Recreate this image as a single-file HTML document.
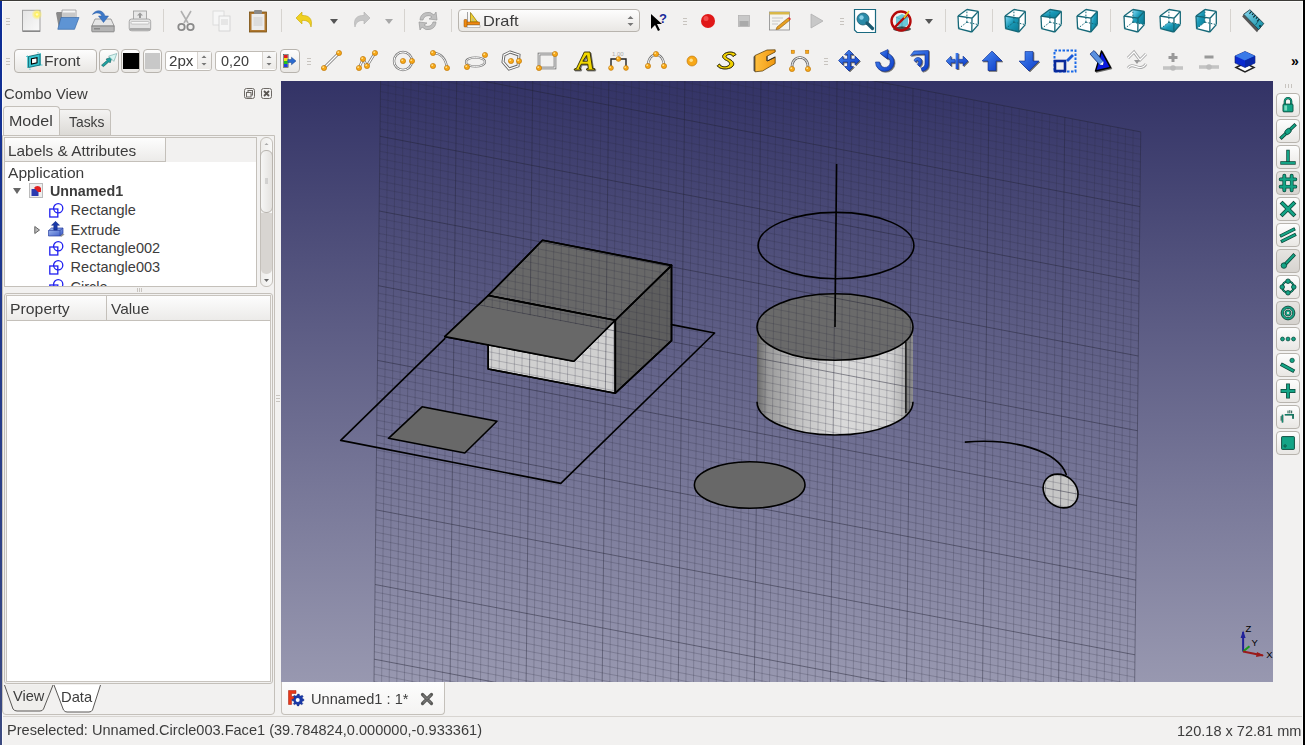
<!DOCTYPE html><html><head><meta charset="utf-8"><style>
html,body{margin:0;padding:0}
body{width:1305px;height:745px;overflow:hidden;position:relative;background:#f2f1f0;font-family:"Liberation Sans",sans-serif}
.abs{position:absolute}
.ic{position:absolute;overflow:visible}
.t{position:absolute;white-space:pre}
.btn{position:absolute;box-sizing:border-box;border:1px solid #b8b4ae;border-radius:4px;background:linear-gradient(#fdfdfd,#e9e7e4)}
</style></head><body>

<div class="abs" style="left:0;top:0;width:1305px;height:1px;background:#3c3b37"></div>
<div class="abs" style="left:0;top:1px;width:2px;height:744px;background:linear-gradient(#0c2c96,#3c4a80)"></div>
<div class="abs" style="left:2px;top:1px;width:1px;height:744px;background:#fbfbfa"></div>
<div class="abs" style="left:2px;top:1px;width:1300px;height:1px;background:#fbfbfa"></div>
<div class="abs" style="left:1302px;top:1px;width:1px;height:744px;background:#fbfbfa"></div>
<div class="abs" style="left:1303px;top:0;width:2px;height:745px;background:#000"></div>
<div class="abs" style="left:6px;top:18px;width:4px;height:1px;background:#c8c4bf;box-shadow:0 3px 0 #c8c4bf,0 6px 0 #c8c4bf"></div>
<svg class="ic" style="left:19.5px;top:9px" width="24" height="24" viewBox="0 0 24 24"><defs><linearGradient id="ng" x1="0" y1="0" x2="1" y2="1"><stop offset="0" stop-color="#e4e4e4"/><stop offset="1" stop-color="#fafafa"/></linearGradient><radialGradient id="sun"><stop offset="0" stop-color="#ffffe0"/><stop offset="0.35" stop-color="#fff060"/><stop offset="1" stop-color="#fff060" stop-opacity="0"/></radialGradient></defs><rect x="2.5" y="1.3" width="17.5" height="21" fill="url(#ng)" stroke="#a0a0a0" stroke-width="1"/><rect x="3" y="21.5" width="17" height="1.2" fill="#777"/><circle cx="17" cy="5.4" r="5.5" fill="url(#sun)"/></svg>
<svg class="ic" style="left:55px;top:8px" width="24" height="24" viewBox="0 0 24 24"><path d="M1,5 L2,4 L8,4 L8,21 L4,21 Z" fill="#8a8a8a"/><path d="M7,2 L21,2 L21,10 L7,10 Z" fill="#f6f6f6" stroke="#9a9a9a" stroke-width="0.8"/><path d="M7.5,4.5 L20.5,4.5 L20.5,9 L7.5,9 Z" fill="#c8c8c8"/><path d="M6,9.5 L24,9.5 L19.5,21.3 L2.8,21.3 Z" fill="#5e94d4" stroke="#3a6aa8" stroke-width="0.7"/></svg>
<svg class="ic" style="left:91px;top:9px" width="24" height="24" viewBox="0 0 24 24"><path d="M4,10 L20,10 L23.2,17 L0.8,17 Z" fill="#e6e6e6" stroke="#8a8a8a" stroke-width="0.8"/><path d="M0.8,17 L23.2,17 L23.2,22.2 Q23.2,22.8 22.5,22.8 L1.5,22.8 Q0.8,22.8 0.8,22.2 Z" fill="#b4b4b4" stroke="#7a7a7a" stroke-width="0.8"/><rect x="3" y="19" width="6" height="1.5" fill="#888"/><path d="M1.5,5.5 C4,0.5 12,0 14,7 L17.5,7 L12.5,13.5 L7.5,7 L10.8,7 C10,3.5 5,3 1.5,5.5 Z" fill="#3c78c8" stroke="#2a5aa0" stroke-width="0.5"/></svg>
<svg class="ic" style="left:127.5px;top:9px" width="24" height="24" viewBox="0 0 24 24"><rect x="5.5" y="2" width="13" height="9" fill="#e8e8e8" stroke="#9a9a9a" stroke-width="0.8"/><path d="M12,3.5 L15,6.5 L13,6.5 L13,9 L11,9 L11,6.5 L9,6.5 Z" fill="#9a9a9a"/><rect x="1.2" y="10" width="21.5" height="11.8" rx="2.5" fill="#e2e2e2" stroke="#9a9a9a" stroke-width="0.8"/><rect x="3" y="12.5" width="18" height="2.5" rx="1" fill="#f8f8f8" stroke="#aaa" stroke-width="0.6"/><rect x="1.5" y="19" width="21" height="2.6" rx="1.2" fill="#aaa"/></svg>
<div class="abs" style="left:163px;top:9px;width:1px;height:23px;background:#d6d3cf"></div>
<svg class="ic" style="left:174px;top:9px" width="24" height="24" viewBox="0 0 24 24"><path d="M7,2 L14,14 M17,2 L10,14" stroke="#b0b0b0" stroke-width="1.6" fill="none"/><circle cx="7.5" cy="18" r="3.2" fill="none" stroke="#8a8a8a" stroke-width="1.8"/><circle cx="16.5" cy="18" r="3.2" fill="none" stroke="#8a8a8a" stroke-width="1.8"/></svg>
<svg class="ic" style="left:210px;top:9px" width="24" height="24" viewBox="0 0 24 24"><rect x="3" y="2" width="11" height="14" fill="#f6f6f6" stroke="#d8d8d8" stroke-width="0.8"/><rect x="9" y="7" width="11" height="15" fill="#f6f6f6" stroke="#d0d0d0" stroke-width="0.8"/><rect x="11" y="10" width="7" height="6" fill="#e6e6e6"/></svg>
<svg class="ic" style="left:246px;top:9px" width="24" height="24" viewBox="0 0 24 24"><rect x="3.5" y="3" width="17" height="20" fill="#b07830" stroke="#7a5010" stroke-width="0.8"/><rect x="5.5" y="5" width="13" height="16" fill="#ececec"/><rect x="8" y="1" width="8" height="4" rx="1" fill="#8a8a8a"/><rect x="7.5" y="8" width="9" height="9" fill="#dcdcdc"/></svg>
<div class="abs" style="left:281px;top:9px;width:1px;height:23px;background:#d6d3cf"></div>
<svg class="ic" style="left:292.5px;top:9px" width="24" height="24" viewBox="0 0 24 24"><path d="M3,9 L9,3 L9,6.5 C16,6 20,10 18,18 C17,13 14,11 9,11.5 L9,15 Z" fill="#f0d020" stroke="#c8a800" stroke-width="0.6"/></svg>
<svg class="ic" style="left:321.5px;top:9px" width="24" height="24" viewBox="0 0 24 24"><path d="M8,10 L16,10 L12,15 Z" fill="#555"/></svg>
<svg class="ic" style="left:349px;top:9px" width="24" height="24" viewBox="0 0 24 24"><path d="M21,9 L15,3 L15,6.5 C8,6 4,10 6,18 C7,13 10,11 15,11.5 L15,15 Z" fill="#c6c6c6" stroke="#b0b0b0" stroke-width="0.6"/></svg>
<svg class="ic" style="left:377px;top:9px" width="24" height="24" viewBox="0 0 24 24"><path d="M8,10 L16,10 L12,15 Z" fill="#a8a8a8"/></svg>
<div class="abs" style="left:404px;top:9px;width:1px;height:23px;background:#d6d3cf"></div>
<svg class="ic" style="left:416px;top:9px" width="24" height="24" viewBox="0 0 24 24"><path d="M4,11 A8,8 0 0 1 18,6 L20,3 L21,11 L13,10 L16,8 A5.5,5.5 0 0 0 7,11 Z" fill="#c0c0c0" stroke="#9a9a9a" stroke-width="0.7"/><path d="M20,13 A8,8 0 0 1 6,18 L4,21 L3,13 L11,14 L8,16 A5.5,5.5 0 0 0 17,13 Z" fill="#c0c0c0" stroke="#9a9a9a" stroke-width="0.7"/></svg>
<div class="abs" style="left:451px;top:9px;width:1px;height:23px;background:#d6d3cf"></div>
<div class="btn" style="left:458px;top:9px;width:182px;height:23px;border-radius:4px"></div>
<svg class="ic" style="left:462px;top:10px" width="20" height="20" viewBox="0 0 20 20"><path d="M5.5,2 L5.5,17.5" stroke="#999" stroke-width="0.9"/><path d="M8.5,2.5 L15.5,12 L8.5,12 Z" fill="#f0d030" stroke="#8a7000" stroke-width="0.7"/><path d="M10,7.5 L12.5,10.8 L10,10.8 Z" fill="#b8b8a0"/><path d="M5,15 L18,15 L18,17.5 L5,17.5 Z" fill="#fafafa" stroke="#9a9a9a" stroke-width="0.6"/><rect x="3.5" y="12" width="14" height="2.8" fill="#f08a10" stroke="#8a4a00" stroke-width="0.5"/><rect x="2" y="9.5" width="3" height="7.5" rx="0.8" fill="#f08a10" stroke="#8a4a00" stroke-width="0.5"/></svg>
<div class="t" style="left:482.54px;top:13.63px;font-size:14.5px;line-height:14.5px;color:#3c3c3c;font-weight:normal;transform:scaleX(1.1296);transform-origin:0 0;">Draft</div>
<svg class="ic" style="left:626px;top:14px" width="9" height="14" viewBox="0 0 9 14"><path d="M1.5,5 L4.5,2 L7.5,5 Z M1.5,9 L4.5,12 L7.5,9 Z" fill="#777"/></svg>
<svg class="ic" style="left:647px;top:9px" width="24" height="24" viewBox="0 0 24 24"><path d="M4,5 L4,20 L8,16 L11,22 L13,21 L10,15 L15,15 Z" fill="#000"/><text x="12" y="14" font-family="Liberation Sans" font-weight="bold" font-size="13" fill="#1a2a9a">?</text></svg>
<div class="abs" style="left:683px;top:18px;width:4px;height:1px;background:#c8c4bf;box-shadow:0 3px 0 #c8c4bf,0 6px 0 #c8c4bf"></div>
<svg class="ic" style="left:696px;top:9px" width="24" height="24" viewBox="0 0 24 24"><circle cx="12" cy="12" r="7" fill="#e01818"/><circle cx="10" cy="9.5" r="2.5" fill="#ff7070" opacity="0.6"/></svg>
<svg class="ic" style="left:732px;top:9px" width="24" height="24" viewBox="0 0 24 24"><rect x="6.5" y="6.5" width="11" height="11" fill="#c8c8c8" stroke="#b4b4b4" stroke-width="0.8"/><rect x="7.5" y="12" width="9" height="5" fill="#aaa"/></svg>
<svg class="ic" style="left:768px;top:9px" width="24" height="24" viewBox="0 0 24 24"><rect x="1.5" y="3" width="20" height="18" fill="#f4f4f0" stroke="#8a8a8a" stroke-width="0.8"/><rect x="1.5" y="3" width="20" height="2.5" fill="#d8b848"/><path d="M4,9 L15,9 M4,12 L12,12 M4,15 L10,15" stroke="#bbb" stroke-width="0.8"/><path d="M9,18 L20,9 L22,11 L11,20 L8,20.5 Z" fill="#e8a020" stroke="#8a5a10" stroke-width="0.6"/><path d="M20,9 L22,11 L23,10 L21,8 Z" fill="#e03030"/></svg>
<svg class="ic" style="left:804px;top:9px" width="24" height="24" viewBox="0 0 24 24"><path d="M7,5 L19,12 L7,19 Z" fill="#c8c8c8" stroke="#b0b0b0" stroke-width="0.8"/></svg>
<div class="abs" style="left:840px;top:18px;width:4px;height:1px;background:#c8c4bf;box-shadow:0 3px 0 #c8c4bf,0 6px 0 #c8c4bf"></div>
<svg class="ic" style="left:852.5px;top:9px" width="24" height="24" viewBox="0 0 24 24"><path d="M1.5,0.5 L22.5,0.5 L22.5,23.5 L4,23.5 L1.5,21 Z" fill="#fff" stroke="#1a6a80" stroke-width="1.2"/><circle cx="10" cy="10" r="6" fill="#2a8aa8" stroke="#1a5a70" stroke-width="0.8"/><circle cx="8.5" cy="8.5" r="2.2" fill="#8ad0e8"/><path d="M14,14 L19.5,19.5" stroke="#1a5a70" stroke-width="3.2" stroke-linecap="round"/></svg>
<svg class="ic" style="left:889px;top:9px" width="24" height="24" viewBox="0 0 24 24"><path d="M7,8 L13,5 L19,8 L19,16 L13,19 L7,16 Z" fill="#6ac8d8"/><path d="M13,11 L19,8 M13,11 L7,8 M13,11 L13,19" stroke="#3a98a8" stroke-width="0.6"/><ellipse cx="13" cy="20" rx="9" ry="2.5" fill="#222" opacity="0.8"/><circle cx="12" cy="12" r="9.5" fill="none" stroke="#b40a0a" stroke-width="2.4"/><path d="M5.5,5.5 L18.5,18.5" stroke="#b40a0a" stroke-width="2.4" transform="rotate(90 12 12)"/><path d="M15,9 L20,2" stroke="#e8d020" stroke-width="1.4"/></svg>
<svg class="ic" style="left:917px;top:9px" width="24" height="24" viewBox="0 0 24 24"><path d="M8,10 L16,10 L12,15 Z" fill="#555"/></svg>
<div class="abs" style="left:945px;top:9px;width:1px;height:23px;background:#d6d3cf"></div>
<svg class="ic" style="left:955.5px;top:9px" width="24" height="24" viewBox="0 0 24 24"><defs><linearGradient id="cg" x1="0" y1="0" x2="1" y2="1"><stop offset="0" stop-color="#8adcf8"/><stop offset="0.45" stop-color="#1a9ab8"/><stop offset="1" stop-color="#0a7890"/></linearGradient></defs><polygon points="2,7 10.9,0.5 22.3,2.4 22.3,15.6 15.8,23 2.6,19.6" fill="#ffffff" stroke="none" /><g stroke="#156878" stroke-width="1.3" fill="none" stroke-linejoin="round"><path d="M2,7 L16,9.2"/><path d="M16,9.2 L15.8,23"/><path d="M15.8,23 L2.6,19.6"/><path d="M2.6,19.6 L2,7"/><path d="M2,7 L10.9,0.5"/><path d="M10.9,0.5 L22.3,2.4"/><path d="M22.3,2.4 L16,9.2"/><path d="M22.3,2.4 L22.3,15.6"/><path d="M22.3,15.6 L15.8,23"/></g><g stroke="#156878" stroke-width="1" fill="none" stroke-dasharray="1.6,1.4"><path d="M10.9,13.2 L10.9,0.5"/><path d="M10.9,13.2 L22.3,15.6"/><path d="M10.9,13.2 L2.6,19.6"/></g></svg>
<div class="abs" style="left:992px;top:9px;width:1px;height:23px;background:#d6d3cf"></div>
<svg class="ic" style="left:1002.5px;top:9px" width="24" height="24" viewBox="0 0 24 24"><defs><linearGradient id="cg" x1="0" y1="0" x2="1" y2="1"><stop offset="0" stop-color="#8adcf8"/><stop offset="0.45" stop-color="#1a9ab8"/><stop offset="1" stop-color="#0a7890"/></linearGradient></defs><polygon points="2,7 10.9,0.5 22.3,2.4 22.3,15.6 15.8,23 2.6,19.6" fill="#ffffff" stroke="none" /><polygon points="2,7 16,9.2 15.8,23 2.6,19.6" fill="url(#cg)" stroke="none" /><g stroke="#156878" stroke-width="1.3" fill="none" stroke-linejoin="round"><path d="M2,7 L16,9.2"/><path d="M16,9.2 L15.8,23"/><path d="M15.8,23 L2.6,19.6"/><path d="M2.6,19.6 L2,7"/><path d="M2,7 L10.9,0.5"/><path d="M10.9,0.5 L22.3,2.4"/><path d="M22.3,2.4 L16,9.2"/><path d="M22.3,2.4 L22.3,15.6"/><path d="M22.3,15.6 L15.8,23"/></g><g stroke="#156878" stroke-width="1" fill="none" stroke-dasharray="1.6,1.4"><path d="M10.9,13.2 L10.9,0.5"/><path d="M10.9,13.2 L22.3,15.6"/><path d="M10.9,13.2 L2.6,19.6"/></g></svg>
<svg class="ic" style="left:1038.5px;top:9px" width="24" height="24" viewBox="0 0 24 24"><defs><linearGradient id="cg" x1="0" y1="0" x2="1" y2="1"><stop offset="0" stop-color="#8adcf8"/><stop offset="0.45" stop-color="#1a9ab8"/><stop offset="1" stop-color="#0a7890"/></linearGradient></defs><polygon points="2,7 10.9,0.5 22.3,2.4 22.3,15.6 15.8,23 2.6,19.6" fill="#ffffff" stroke="none" /><polygon points="2,7 10.9,0.5 22.3,2.4 16,9.2" fill="url(#cg)" stroke="none" /><g stroke="#156878" stroke-width="1.3" fill="none" stroke-linejoin="round"><path d="M2,7 L16,9.2"/><path d="M16,9.2 L15.8,23"/><path d="M15.8,23 L2.6,19.6"/><path d="M2.6,19.6 L2,7"/><path d="M2,7 L10.9,0.5"/><path d="M10.9,0.5 L22.3,2.4"/><path d="M22.3,2.4 L16,9.2"/><path d="M22.3,2.4 L22.3,15.6"/><path d="M22.3,15.6 L15.8,23"/></g><g stroke="#156878" stroke-width="1" fill="none" stroke-dasharray="1.6,1.4"><path d="M10.9,13.2 L10.9,0.5"/><path d="M10.9,13.2 L22.3,15.6"/><path d="M10.9,13.2 L2.6,19.6"/></g></svg>
<svg class="ic" style="left:1074.5px;top:9px" width="24" height="24" viewBox="0 0 24 24"><defs><linearGradient id="cg" x1="0" y1="0" x2="1" y2="1"><stop offset="0" stop-color="#8adcf8"/><stop offset="0.45" stop-color="#1a9ab8"/><stop offset="1" stop-color="#0a7890"/></linearGradient></defs><polygon points="2,7 10.9,0.5 22.3,2.4 22.3,15.6 15.8,23 2.6,19.6" fill="#ffffff" stroke="none" /><polygon points="16,9.2 22.3,2.4 22.3,15.6 15.8,23" fill="url(#cg)" stroke="none" /><g stroke="#156878" stroke-width="1.3" fill="none" stroke-linejoin="round"><path d="M2,7 L16,9.2"/><path d="M16,9.2 L15.8,23"/><path d="M15.8,23 L2.6,19.6"/><path d="M2.6,19.6 L2,7"/><path d="M2,7 L10.9,0.5"/><path d="M10.9,0.5 L22.3,2.4"/><path d="M22.3,2.4 L16,9.2"/><path d="M22.3,2.4 L22.3,15.6"/><path d="M22.3,15.6 L15.8,23"/></g><g stroke="#156878" stroke-width="1" fill="none" stroke-dasharray="1.6,1.4"><path d="M10.9,13.2 L10.9,0.5"/><path d="M10.9,13.2 L22.3,15.6"/><path d="M10.9,13.2 L2.6,19.6"/></g></svg>
<div class="abs" style="left:1110px;top:9px;width:1px;height:23px;background:#d6d3cf"></div>
<svg class="ic" style="left:1121.5px;top:9px" width="24" height="24" viewBox="0 0 24 24"><defs><linearGradient id="cg" x1="0" y1="0" x2="1" y2="1"><stop offset="0" stop-color="#8adcf8"/><stop offset="0.45" stop-color="#1a9ab8"/><stop offset="1" stop-color="#0a7890"/></linearGradient></defs><polygon points="2,7 10.9,0.5 22.3,2.4 22.3,15.6 15.8,23 2.6,19.6" fill="#ffffff" stroke="none" /><polygon points="10.9,0.5 22.3,2.4 22.3,15.6 10.9,13.2" fill="url(#cg)" stroke="none" /><g stroke="#156878" stroke-width="1.3" fill="none" stroke-linejoin="round"><path d="M2,7 L16,9.2"/><path d="M16,9.2 L15.8,23"/><path d="M15.8,23 L2.6,19.6"/><path d="M2.6,19.6 L2,7"/><path d="M2,7 L10.9,0.5"/><path d="M10.9,0.5 L22.3,2.4"/><path d="M22.3,2.4 L16,9.2"/><path d="M22.3,2.4 L22.3,15.6"/><path d="M22.3,15.6 L15.8,23"/></g><g stroke="#156878" stroke-width="1" fill="none" stroke-dasharray="1.6,1.4"><path d="M10.9,13.2 L10.9,0.5"/><path d="M10.9,13.2 L22.3,15.6"/><path d="M10.9,13.2 L2.6,19.6"/></g></svg>
<svg class="ic" style="left:1157.5px;top:9px" width="24" height="24" viewBox="0 0 24 24"><defs><linearGradient id="cg" x1="0" y1="0" x2="1" y2="1"><stop offset="0" stop-color="#8adcf8"/><stop offset="0.45" stop-color="#1a9ab8"/><stop offset="1" stop-color="#0a7890"/></linearGradient></defs><polygon points="2,7 10.9,0.5 22.3,2.4 22.3,15.6 15.8,23 2.6,19.6" fill="#ffffff" stroke="none" /><polygon points="2.6,19.6 15.8,23 22.3,15.6 10.9,13.2" fill="url(#cg)" stroke="none" /><g stroke="#156878" stroke-width="1.3" fill="none" stroke-linejoin="round"><path d="M2,7 L16,9.2"/><path d="M16,9.2 L15.8,23"/><path d="M15.8,23 L2.6,19.6"/><path d="M2.6,19.6 L2,7"/><path d="M2,7 L10.9,0.5"/><path d="M10.9,0.5 L22.3,2.4"/><path d="M22.3,2.4 L16,9.2"/><path d="M22.3,2.4 L22.3,15.6"/><path d="M22.3,15.6 L15.8,23"/></g><g stroke="#156878" stroke-width="1" fill="none" stroke-dasharray="1.6,1.4"><path d="M10.9,13.2 L10.9,0.5"/><path d="M10.9,13.2 L22.3,15.6"/><path d="M10.9,13.2 L2.6,19.6"/></g></svg>
<svg class="ic" style="left:1193.5px;top:9px" width="24" height="24" viewBox="0 0 24 24"><defs><linearGradient id="cg" x1="0" y1="0" x2="1" y2="1"><stop offset="0" stop-color="#8adcf8"/><stop offset="0.45" stop-color="#1a9ab8"/><stop offset="1" stop-color="#0a7890"/></linearGradient></defs><polygon points="2,7 10.9,0.5 22.3,2.4 22.3,15.6 15.8,23 2.6,19.6" fill="#ffffff" stroke="none" /><polygon points="2,7 10.9,0.5 10.9,13.2 2.6,19.6" fill="url(#cg)" stroke="none" /><g stroke="#156878" stroke-width="1.3" fill="none" stroke-linejoin="round"><path d="M2,7 L16,9.2"/><path d="M16,9.2 L15.8,23"/><path d="M15.8,23 L2.6,19.6"/><path d="M2.6,19.6 L2,7"/><path d="M2,7 L10.9,0.5"/><path d="M10.9,0.5 L22.3,2.4"/><path d="M22.3,2.4 L16,9.2"/><path d="M22.3,2.4 L22.3,15.6"/><path d="M22.3,15.6 L15.8,23"/></g><g stroke="#156878" stroke-width="1" fill="none" stroke-dasharray="1.6,1.4"><path d="M10.9,13.2 L10.9,0.5"/><path d="M10.9,13.2 L22.3,15.6"/><path d="M10.9,13.2 L2.6,19.6"/></g></svg>
<div class="abs" style="left:1230px;top:9px;width:1px;height:23px;background:#d6d3cf"></div>
<svg class="ic" style="left:1240.5px;top:9px" width="24" height="24" viewBox="0 0 24 24"><defs><linearGradient id="rg" x1="0" y1="0" x2="1" y2="1"><stop offset="0" stop-color="#8ad8f0"/><stop offset="1" stop-color="#0a8aa0"/></linearGradient></defs><path d="M1.2,7.6 L2.7,5.2 L17.7,20.7 L16,23.2 Z" fill="#555"/><path d="M2.7,5.2 L8.9,0.7 L22.8,14.5 L17.7,20.7 Z" fill="url(#rg)" stroke="#0a3038" stroke-width="0.8" stroke-linejoin="round"/><path d="M10.57,2.36 l-2.2,2.2 M12.51,4.29 l-1.5,1.5 M14.46,6.22 l-2.2,2.2 M16.41,8.15 l-1.5,1.5 M18.35,10.08 l-2.2,2.2 " stroke="#0a2028" stroke-width="1.1"/><path d="M18.5,10.3 L14.5,16" stroke="#0a4a58" stroke-width="0.7"/><circle cx="19" cy="17" r="1" fill="#0a3038"/></svg>
<div class="abs" style="left:6px;top:58px;width:4px;height:1px;background:#c8c4bf;box-shadow:0 3px 0 #c8c4bf,0 6px 0 #c8c4bf"></div>
<div class="btn" style="left:14px;top:49px;width:83px;height:24px"></div>
<svg class="ic" style="left:26px;top:52px" width="17" height="18" viewBox="0 0 17 18"><path d="M1.5,3.5 L1.5,16 M14.5,1 L14.5,13.5 M0,4.5 L4,4.5 M12,13 L16.5,13 M4,16.5 L4,18 M12,0 L12,1.5" stroke="#40c0c8" stroke-width="0.8"/><path d="M2.5,4.5 L14,2 L14,13 L2.5,15.5 Z" fill="#38c4d0" stroke="#0e6a74" stroke-width="0.9"/><path d="M5.5,6.8 L11,5.6 L11,10.8 L5.5,12 Z" fill="#fff" stroke="#000" stroke-width="1.1"/></svg>
<div class="t" style="left:44.41px;top:53.63px;font-size:14.5px;line-height:14.5px;color:#3c3c3c;font-weight:normal;transform:scaleX(1.0769);transform-origin:0 0;">Front</div>
<div class="btn" style="left:99px;top:49px;width:20px;height:24px"></div>
<svg class="ic" style="left:100px;top:52px" width="18" height="18" viewBox="0 0 24 24"><path d="M2,17.5 L9.5,11 L8,9.5 L16.5,6 L13.5,14.5 L12,13 L4.5,19.5 Z" fill="#20a0a0" stroke="#0a5050" stroke-width="0.7"/><path d="M11.5,5.5 L22.5,2 L18.5,12.5 Z" fill="#d8f4f0" stroke="#5a9a9a" stroke-width="0.7"/></svg>
<div class="btn" style="left:121px;top:49px;width:19px;height:24px"></div>
<div class="abs" style="left:123px;top:53px;width:16px;height:16px;background:#000"></div>
<div class="btn" style="left:143px;top:49px;width:19px;height:24px"></div>
<div class="abs" style="left:145px;top:53px;width:15px;height:16px;background:#c8c8c8"></div>
<div class="abs" style="left:165px;top:51px;width:47px;height:20px;box-sizing:border-box;border:1px solid #c0bcb6;border-radius:3px;background:#fff"></div>
<div class="abs" style="left:197px;top:52px;width:13px;height:17px;background:linear-gradient(#f8f8f8,#eceae7);border-left:1px solid #d8d4cf"></div>
<svg class="ic" style="left:199px;top:53px" width="10" height="15" viewBox="0 0 10 15"><path d="M2.5,5 L5,2.5 L7.5,5 Z M2.5,10 L5,12.5 L7.5,10 Z" fill="#777"/></svg>
<div class="t" style="left:168.97px;top:54.43px;font-size:14.5px;line-height:14.5px;color:#3c3c3c;font-weight:normal;transform:scaleX(1.0444);transform-origin:0 0;">2px</div>
<div class="abs" style="left:215px;top:51px;width:62px;height:20px;box-sizing:border-box;border:1px solid #c0bcb6;border-radius:3px;background:#fff"></div>
<div class="abs" style="left:262px;top:52px;width:13px;height:17px;background:linear-gradient(#f8f8f8,#eceae7);border-left:1px solid #d8d4cf"></div>
<svg class="ic" style="left:264px;top:53px" width="10" height="15" viewBox="0 0 10 15"><path d="M2.5,5 L5,2.5 L7.5,5 Z M2.5,10 L5,12.5 L7.5,10 Z" fill="#777"/></svg>
<div class="t" style="left:220.90px;top:54.43px;font-size:14.5px;line-height:14.5px;color:#3c3c3c;font-weight:normal;transform:scaleX(0.9926);transform-origin:0 0;">0,20</div>
<div class="btn" style="left:280px;top:49px;width:20px;height:24px"></div>
<svg class="ic" style="left:281px;top:52px" width="18" height="18" viewBox="0 0 24 24"><rect x="4" y="4" width="5" height="4" fill="#e02020"/><rect x="4" y="8" width="5" height="4" fill="#f0e020"/><rect x="4" y="12" width="5" height="4" fill="#20c020"/><rect x="4" y="16" width="5" height="4" fill="#2040e0"/><rect x="3.5" y="3.5" width="6" height="17" fill="none" stroke="#444" stroke-width="0.8"/><path d="M9,10 L14,10 L14,7 L20,12 L14,17 L14,14 L9,14 Z" fill="#2a6ad0" stroke="#103a80" stroke-width="0.6"/></svg>
<div class="abs" style="left:307px;top:58px;width:4px;height:1px;background:#c8c4bf;box-shadow:0 3px 0 #c8c4bf,0 6px 0 #c8c4bf"></div>
<svg class="ic" style="left:320px;top:49px" width="24" height="24" viewBox="0 0 24 24"><path d="M4,19 L19,4" stroke="#777" stroke-width="3"/><path d="M4,19 L19,4" stroke="#fff" stroke-width="1.4"/><circle cx="4" cy="19" r="2.6" fill="#f7a818" stroke="#b86e00" stroke-width="0.6"/><circle cx="3.2" cy="18.2" r="0.9099999999999999" fill="#ffe08a"/><circle cx="19" cy="4" r="2.6" fill="#f7a818" stroke="#b86e00" stroke-width="0.6"/><circle cx="18.2" cy="3.2" r="0.9099999999999999" fill="#ffe08a"/></svg>
<svg class="ic" style="left:355.5px;top:49px" width="24" height="24" viewBox="0 0 24 24"><path d="M3,19 L7,10 L11,17 L19,4" stroke="#777" stroke-width="2.6" fill="none"/><path d="M3,19 L7,10 L11,17 L19,4" stroke="#fff" stroke-width="1.2" fill="none"/><circle cx="3" cy="19" r="2.6" fill="#f7a818" stroke="#b86e00" stroke-width="0.6"/><circle cx="2.2" cy="18.2" r="0.9099999999999999" fill="#ffe08a"/><circle cx="7" cy="10" r="2.6" fill="#f7a818" stroke="#b86e00" stroke-width="0.6"/><circle cx="6.2" cy="9.2" r="0.9099999999999999" fill="#ffe08a"/><circle cx="11" cy="17" r="2.6" fill="#f7a818" stroke="#b86e00" stroke-width="0.6"/><circle cx="10.2" cy="16.2" r="0.9099999999999999" fill="#ffe08a"/><circle cx="19" cy="4" r="2.6" fill="#f7a818" stroke="#b86e00" stroke-width="0.6"/><circle cx="18.2" cy="3.2" r="0.9099999999999999" fill="#ffe08a"/></svg>
<svg class="ic" style="left:391.7px;top:49px" width="24" height="24" viewBox="0 0 24 24"><circle cx="11" cy="12" r="9" fill="none" stroke="#777" stroke-width="2.4"/><circle cx="11" cy="12" r="9" fill="none" stroke="#fff" stroke-width="1"/><circle cx="11" cy="12" r="2.6" fill="#f7a818" stroke="#b86e00" stroke-width="0.6"/><circle cx="10.2" cy="11.2" r="0.9099999999999999" fill="#ffe08a"/><circle cx="20" cy="12" r="2.6" fill="#f7a818" stroke="#b86e00" stroke-width="0.6"/><circle cx="19.2" cy="11.2" r="0.9099999999999999" fill="#ffe08a"/></svg>
<svg class="ic" style="left:427.6px;top:49px" width="24" height="24" viewBox="0 0 24 24"><path d="M5,4 C13,4 18,10 19,19" stroke="#777" stroke-width="2.4" fill="none"/><path d="M5,4 C13,4 18,10 19,19" stroke="#fff" stroke-width="1" fill="none"/><circle cx="5" cy="4" r="2.6" fill="#f7a818" stroke="#b86e00" stroke-width="0.6"/><circle cx="4.2" cy="3.2" r="0.9099999999999999" fill="#ffe08a"/><circle cx="5" cy="17" r="2.6" fill="#f7a818" stroke="#b86e00" stroke-width="0.6"/><circle cx="4.2" cy="16.2" r="0.9099999999999999" fill="#ffe08a"/><circle cx="19" cy="19" r="2.6" fill="#f7a818" stroke="#b86e00" stroke-width="0.6"/><circle cx="18.2" cy="18.2" r="0.9099999999999999" fill="#ffe08a"/></svg>
<svg class="ic" style="left:463.6px;top:49px" width="24" height="24" viewBox="0 0 24 24"><ellipse cx="11.5" cy="13" rx="9.5" ry="4.5" fill="none" stroke="#777" stroke-width="2.2"/><ellipse cx="11.5" cy="13" rx="9.5" ry="4.5" fill="none" stroke="#fff" stroke-width="0.9"/><circle cx="3" cy="18" r="2.6" fill="#f7a818" stroke="#b86e00" stroke-width="0.6"/><circle cx="2.2" cy="17.2" r="0.9099999999999999" fill="#ffe08a"/><circle cx="21" cy="6" r="2.6" fill="#f7a818" stroke="#b86e00" stroke-width="0.6"/><circle cx="20.2" cy="5.2" r="0.9099999999999999" fill="#ffe08a"/></svg>
<svg class="ic" style="left:499.5px;top:49px" width="24" height="24" viewBox="0 0 24 24"><path d="M10,3 L19,6 L18,17 L9,20 L3,13 L4,6 Z" fill="none" stroke="#666" stroke-width="3"/><path d="M10,3 L19,6 L18,17 L9,20 L3,13 L4,6 Z" fill="none" stroke="#fff" stroke-width="1.2"/><circle cx="11" cy="12" r="2.6" fill="#f7a818" stroke="#b86e00" stroke-width="0.6"/><circle cx="10.2" cy="11.2" r="0.9099999999999999" fill="#ffe08a"/><circle cx="19" cy="12" r="2.6" fill="#f7a818" stroke="#b86e00" stroke-width="0.6"/><circle cx="18.2" cy="11.2" r="0.9099999999999999" fill="#ffe08a"/></svg>
<svg class="ic" style="left:535.5px;top:49px" width="24" height="24" viewBox="0 0 24 24"><rect x="3" y="5" width="16" height="14" fill="none" stroke="#666" stroke-width="2.6"/><rect x="3" y="5" width="16" height="14" fill="none" stroke="#fff" stroke-width="1"/><circle cx="3" cy="19" r="2.6" fill="#f7a818" stroke="#b86e00" stroke-width="0.6"/><circle cx="2.2" cy="18.2" r="0.9099999999999999" fill="#ffe08a"/><circle cx="19" cy="5" r="2.6" fill="#f7a818" stroke="#b86e00" stroke-width="0.6"/><circle cx="18.2" cy="4.2" r="0.9099999999999999" fill="#ffe08a"/></svg>
<svg class="ic" style="left:571.5px;top:49px" width="24" height="24" viewBox="0 0 24 24"><path d="M2,21 L2.8,19.6 L4.3,19.6 L12.3,3 L18,3 L20.6,19.6 L22.8,19.6 L22.5,21 L14.5,21 L14.8,19.6 L16.3,19.6 L15.8,15.2 L9.3,15.2 L7.2,19.6 L8.8,19.6 L8.4,21 Z M10.8,12.2 L15.4,12.2 L14.6,6.5 Z" fill="#f2d800" stroke="#2a2400" stroke-width="0.9" stroke-linejoin="round" fill-rule="evenodd" filter="drop-shadow(1px 1px 0.5px rgba(0,0,0,0.5))"/></svg>
<svg class="ic" style="left:607.3px;top:49px" width="24" height="24" viewBox="0 0 24 24"><path d="M4,19 L4,10 L19,10 L19,19" stroke="#222" stroke-width="1.4" fill="none"/><text x="5" y="7" font-family="Liberation Sans" font-size="6" fill="#aaa">1.00</text><circle cx="4" cy="19" r="2.4" fill="#f7a818" stroke="#b86e00" stroke-width="0.6"/><circle cx="3.2" cy="18.2" r="0.84" fill="#ffe08a"/><circle cx="19" cy="19" r="2.4" fill="#f7a818" stroke="#b86e00" stroke-width="0.6"/><circle cx="18.2" cy="18.2" r="0.84" fill="#ffe08a"/><circle cx="11.5" cy="10" r="2.4" fill="#f7a818" stroke="#b86e00" stroke-width="0.6"/><circle cx="10.7" cy="9.2" r="0.84" fill="#ffe08a"/></svg>
<svg class="ic" style="left:643.7px;top:49px" width="24" height="24" viewBox="0 0 24 24"><path d="M4,17 C4,2 20,2 20,17" stroke="#777" stroke-width="2.4" fill="none"/><path d="M4,17 C4,2 20,2 20,17" stroke="#fff" stroke-width="1" fill="none"/><circle cx="4" cy="17" r="2.6" fill="#f7a818" stroke="#b86e00" stroke-width="0.6"/><circle cx="3.2" cy="16.2" r="0.9099999999999999" fill="#ffe08a"/><circle cx="12" cy="5" r="2.6" fill="#f7a818" stroke="#b86e00" stroke-width="0.6"/><circle cx="11.2" cy="4.2" r="0.9099999999999999" fill="#ffe08a"/><circle cx="20" cy="17" r="2.6" fill="#f7a818" stroke="#b86e00" stroke-width="0.6"/><circle cx="19.2" cy="16.2" r="0.9099999999999999" fill="#ffe08a"/></svg>
<svg class="ic" style="left:679.6px;top:49px" width="24" height="24" viewBox="0 0 24 24"><circle cx="12" cy="12" r="5" fill="#f7a818" stroke="#b86e00" stroke-width="0.6"/><circle cx="11.2" cy="11.2" r="1.75" fill="#ffe08a"/></svg>
<svg class="ic" style="left:714.7px;top:49px" width="24" height="24" viewBox="0 0 24 24"><path d="M21,5.5 C19,2 11,2.5 8.5,5.5 C6,8.5 9.5,10.5 12.5,12 C15,13.3 15.5,15.5 13,17 C10.5,18.5 5.5,18 4.5,15 L2.3,16.8 C4.5,20.5 13,21 17,18 C20.5,15 18,12 15,10.5 C12,9 10,8 11.5,6.5 C13,5 17,5 18,7.5 Z" fill="#f0d000" stroke="#2a2400" stroke-width="0.9" filter="drop-shadow(0.8px 0.8px 0.4px rgba(0,0,0,0.5))"/></svg>
<svg class="ic" style="left:751.8px;top:49px" width="24" height="24" viewBox="0 0 24 24"><defs><linearGradient id="fbg" x1="0" y1="0" x2="1" y2="0"><stop offset="0" stop-color="#ffc040"/><stop offset="1" stop-color="#f09810"/></linearGradient></defs><path d="M1.5,7.8 L3,6.5 L3,22.8 L1.5,21.8 Z" fill="#606060"/><path d="M3,6.5 L15,1 L23.2,0.8 L23.2,3 L15,7.2 L15,12 L23.2,7.8 L23.2,14.5 L10.5,22 L3,22.8 Z" fill="url(#fbg)" stroke="#4a3000" stroke-width="0.7" stroke-linejoin="round"/><path d="M15,7.2 L15,12 M15.5,12 L23,8.3" stroke="#303030" stroke-width="1"/></svg>
<svg class="ic" style="left:788px;top:49px" width="24" height="24" viewBox="0 0 24 24"><path d="M4,19 C3,5 21,5 20,19" stroke="#6a6a6a" stroke-width="2.6" fill="none"/><path d="M4,19 C3,5 21,5 20,19" stroke="#fff" stroke-width="1" fill="none"/><rect x="3.2" y="1.2" width="3.2" height="3.2" fill="#f7a818" stroke="#b86e00" stroke-width="0.5"/><rect x="17.6" y="1.2" width="3.2" height="3.2" fill="#f7a818" stroke="#b86e00" stroke-width="0.5"/><circle cx="4" cy="20" r="2.6" fill="#f7a818" stroke="#b86e00" stroke-width="0.6"/><circle cx="3.2" cy="19.2" r="0.9099999999999999" fill="#ffe08a"/><circle cx="20" cy="20" r="2.6" fill="#f7a818" stroke="#b86e00" stroke-width="0.6"/><circle cx="19.2" cy="19.2" r="0.9099999999999999" fill="#ffe08a"/></svg>
<div class="abs" style="left:824px;top:58px;width:4px;height:1px;background:#c8c4bf;box-shadow:0 3px 0 #c8c4bf,0 6px 0 #c8c4bf"></div>
<svg class="ic" style="left:836.6px;top:49px" width="24" height="24" viewBox="0 0 24 24"><defs><linearGradient id="bl" x1="0" y1="0" x2="1" y2="1"><stop offset="0" stop-color="#4a8af0"/><stop offset="1" stop-color="#0a3ac8"/></linearGradient></defs><path filter="drop-shadow(1px 1px 0.5px rgba(0,0,0,0.55))" d="M12,1 L16.5,5.5 L13.5,5.5 L13.5,10 L18,10 L18,7 L22.5,11.5 L18,16 L18,13 L13.5,13 L13.5,17.5 L16.5,17.5 L12,22 L7.5,17.5 L10.5,17.5 L10.5,13 L6,13 L6,16 L1.5,11.5 L6,7 L6,10 L10.5,10 L10.5,5.5 L7.5,5.5 Z" fill="url(#bl)" stroke="#0a2a90" stroke-width="0.6"/></svg>
<svg class="ic" style="left:872.8px;top:49px" width="24" height="24" viewBox="0 0 24 24"><defs><linearGradient id="bl" x1="0" y1="0" x2="1" y2="1"><stop offset="0" stop-color="#4a8af0"/><stop offset="1" stop-color="#0a3ac8"/></linearGradient></defs><g filter="drop-shadow(1px 1px 0.5px rgba(0,0,0,0.55))"><path d="M2.5,13 A9.3,9.3 0 1 0 12.5,3.8 L12.5,7.9 A5.3,5.3 0 1 1 6.6,13 Z" fill="url(#bl)" stroke="#0a2a90" stroke-width="0.6"/><path d="M7,4.2 L15,0.5 L14.5,10 Z" fill="url(#bl)" stroke="#0a2a90" stroke-width="0.6"/></g></svg>
<svg class="ic" style="left:908.6px;top:49px" width="24" height="24" viewBox="0 0 24 24"><defs><linearGradient id="bl" x1="0" y1="0" x2="1" y2="1"><stop offset="0" stop-color="#4a8af0"/><stop offset="1" stop-color="#0a3ac8"/></linearGradient></defs><g filter="drop-shadow(1px 1px 0.5px rgba(0,0,0,0.55))"><path d="M1.5,6.5 L5,2 L19.5,1.5 L19.5,15 C19.5,19.5 17,21.5 13,22.2 L12.2,19 C15,18.3 16,17 16,14 L16,5.2 L6.5,5.6 Z" fill="url(#bl)" stroke="#0a2a90" stroke-width="0.6"/><path d="M5,11.5 C6,7.5 12,7.5 12.8,11.5 C13.3,14.5 11.5,16.5 10.5,17.5 L8.3,15.3 C9.5,14.2 10,12.8 9,11.8 C8,10.8 6.8,11.8 7.2,13.2 Z" fill="url(#bl)" stroke="#0a2a90" stroke-width="0.6"/></g></svg>
<svg class="ic" style="left:944.5px;top:49px" width="24" height="24" viewBox="0 0 24 24"><defs><linearGradient id="bl" x1="0" y1="0" x2="1" y2="1"><stop offset="0" stop-color="#4a8af0"/><stop offset="1" stop-color="#0a3ac8"/></linearGradient></defs><g filter="drop-shadow(1px 1px 0.5px rgba(0,0,0,0.55))"><path d="M1,12 L6,7 L6,10.3 L10.2,10.3 L10.2,13.7 L6,13.7 L6,17 Z M23,12 L18,7 L18,10.3 L13.8,10.3 L13.8,13.7 L18,13.7 L18,17 Z" fill="url(#bl)" stroke="#0a2a90" stroke-width="0.5"/><rect x="10.6" y="4" width="2.8" height="16" fill="url(#bl)"/></g></svg>
<svg class="ic" style="left:980.4px;top:49px" width="24" height="24" viewBox="0 0 24 24"><defs><linearGradient id="bl" x1="0" y1="0" x2="1" y2="1"><stop offset="0" stop-color="#4a8af0"/><stop offset="1" stop-color="#0a3ac8"/></linearGradient></defs><path filter="drop-shadow(1px 1px 0.5px rgba(0,0,0,0.55))" d="M12,2 L22,12 L16,12 L16,21.5 L8,21.5 L8,12 L2,12 Z" fill="url(#bl)" stroke="#0a2a90" stroke-width="0.6"/></svg>
<svg class="ic" style="left:1017.2px;top:49px" width="24" height="24" viewBox="0 0 24 24"><defs><linearGradient id="bl" x1="0" y1="0" x2="1" y2="1"><stop offset="0" stop-color="#4a8af0"/><stop offset="1" stop-color="#0a3ac8"/></linearGradient></defs><path filter="drop-shadow(1px 1px 0.5px rgba(0,0,0,0.55))" d="M12,22 L22,12 L16,12 L16,2.5 L8,2.5 L8,12 L2,12 Z" fill="url(#bl)" stroke="#0a2a90" stroke-width="0.6"/></svg>
<svg class="ic" style="left:1053px;top:49px" width="24" height="24" viewBox="0 0 24 24"><rect x="1.5" y="1.5" width="21" height="21" fill="none" stroke="#1a6ae8" stroke-width="2" stroke-dasharray="2.5,1.5"/><rect x="2" y="12" width="10" height="10" fill="none" stroke="#0a2a9a" stroke-width="2.6"/><path d="M13,11 L19,5 L21,7 L15,13 Z" fill="#1a5ad8"/></svg>
<svg class="ic" style="left:1088.2px;top:49px" width="24" height="24" viewBox="0 0 24 24"><defs><linearGradient id="bl" x1="0" y1="0" x2="1" y2="1"><stop offset="0" stop-color="#4a8af0"/><stop offset="1" stop-color="#0a3ac8"/></linearGradient></defs><g filter="drop-shadow(1px 1px 0.5px rgba(0,0,0,0.55))"><path d="M13.5,2 L22.5,18.5 L7.5,22 Z" fill="#0a1ae0" stroke="#000" stroke-width="1.4" stroke-linejoin="round"/><path d="M2,5 L6,1.5 L15.5,12.5 L15,16 L11.5,15.5 Z" fill="#5a90e0" stroke="#0a2a80" stroke-width="0.7"/><path d="M11.5,15.5 L15,16 L15.5,12.5 Z" fill="#fff"/></g></svg>
<svg class="ic" style="left:1124.5px;top:49px" width="24" height="24" viewBox="0 0 24 24"><path d="M3,9 L9,3 L15,11 L21,5" stroke="#aaa" stroke-width="3" fill="none"/><path d="M3,9 L9,3 L15,11 L21,5" stroke="#fff" stroke-width="1.2" fill="none"/><path d="M3,19 C8,12 15,24 21,15" stroke="#aaa" stroke-width="3" fill="none"/><path d="M3,19 C8,12 15,24 21,15" stroke="#fff" stroke-width="1.2" fill="none"/><path d="M9,11 L15,11 L12,15 Z" fill="#999"/></svg>
<svg class="ic" style="left:1161px;top:49px" width="24" height="24" viewBox="0 0 24 24"><path d="M2,19 L22,19" stroke="#aaa" stroke-width="3"/><path d="M2,19 L22,19" stroke="#ddd" stroke-width="1"/><circle cx="12" cy="19" r="2.8" fill="#bbb"/><path d="M12,4 L12,13 M7.5,8.5 L16.5,8.5" stroke="#999" stroke-width="3"/></svg>
<svg class="ic" style="left:1197px;top:49px" width="24" height="24" viewBox="0 0 24 24"><path d="M2,18 L22,18" stroke="#aaa" stroke-width="3"/><path d="M2,18 L22,18" stroke="#ddd" stroke-width="1"/><circle cx="12" cy="18" r="2.8" fill="#bbb"/><path d="M7.5,8 L16.5,8" stroke="#999" stroke-width="3"/></svg>
<svg class="ic" style="left:1232.8px;top:49px" width="24" height="24" viewBox="0 0 24 24"><path d="M3,18.5 L12,14 L21,18.5 L12,23 Z" fill="#fff" stroke="#222" stroke-width="1.5"/><path d="M2,7 L12,2.5 L22,7 L22,14 L12,18.5 L2,14 Z" fill="#0a2ad0" stroke="#0a1a60" stroke-width="0.6"/><path d="M2,7 L12,2.5 L22,7 L12,11.5 Z" fill="#3a7ae8"/><path d="M12,11.5 L22,7 L22,14 L12,18.5 Z" fill="#0a28a8"/></svg>
<div class="t" style="left:1291.00px;top:54.15px;font-size:14px;line-height:14px;color:#000;font-weight:bold;">»</div>
<div class="abs" style="left:281px;top:81px;width:992px;height:601px;overflow:hidden">
<svg width="992" height="601" viewBox="0 0 992 601" style="position:absolute;left:0;top:0">
<defs><linearGradient id="bg" x1="0" y1="0" x2="0" y2="1"><stop offset="0" stop-color="#333366"/><stop offset="1" stop-color="#9898b0"/></linearGradient><linearGradient id="cyl" x1="0" y1="0" x2="1" y2="0"><stop offset="0" stop-color="#6a6a6a"/><stop offset="0.07" stop-color="#9a9a9a"/><stop offset="0.3" stop-color="#c6c6c6"/><stop offset="0.55" stop-color="#dadada"/><stop offset="0.85" stop-color="#d2d2d2"/><stop offset="0.945" stop-color="#b4b4b4"/><stop offset="0.95" stop-color="#7a7a7a"/><stop offset="1" stop-color="#8e8e8e"/></linearGradient></defs>
<rect width="992" height="601" fill="url(#bg)"/>
<polygon points="207.2,214.5 334.3,239.2 334.3,312.2 207.2,288.0" fill="#d0d0d0" stroke="#000" stroke-width="1.6" stroke-linejoin="round"/>
<polygon points="390.5,184.4 390.5,259.7 334.3,312.2 334.3,239.2" fill="#5e5e5e" stroke="#000" stroke-width="1.6" stroke-linejoin="round"/>
<polygon points="261.5,159.3 390.5,184.4 334.3,239.2 207.2,214.5" fill="#686868" stroke="#000" stroke-width="1.6" stroke-linejoin="round"/>
<polygon points="163.8,255.6 292.8,280.2 334.3,239.2 207.2,214.5" fill="#686868" stroke="#000" stroke-width="1.6" stroke-linejoin="round"/>
<path d="M476.0,246.0 L476.0,320.8 A78,33.2 0 0 0 632.0,320.8 L632.0,246.0 Z" fill="url(#cyl)"/>
<ellipse cx="554" cy="246" rx="78" ry="33.2" fill="#6a6a6a"/>
<ellipse cx="0" cy="0" rx="18.6" ry="15.6" transform="translate(779.6,410.0) rotate(40)" fill="#c6c6c6"/>
<path d="M108.21,-92.65L99.19,729.05M115.80,-91.20L106.78,730.50M123.39,-89.75L114.37,731.95M130.98,-88.30L121.96,733.40M138.57,-86.85L129.56,734.85M146.17,-85.40L137.15,736.30M153.76,-83.95L144.74,737.75M161.35,-82.50L152.33,739.20M168.94,-81.05L159.92,740.65M184.12,-78.15L175.10,743.55M191.71,-76.70L182.69,745.00M199.30,-75.25L190.28,746.45M206.89,-73.80L197.87,747.90M214.49,-72.35L205.47,749.35M222.08,-70.90L213.06,750.80M229.67,-69.45L220.65,752.25M237.26,-68.00L228.24,753.70M244.85,-66.55L235.83,755.15M260.03,-63.65L251.01,758.05M267.62,-62.20L258.60,759.50M275.21,-60.75L266.19,760.95M282.80,-59.30L273.78,762.40M290.39,-57.85L281.38,763.85M297.99,-56.40L288.97,765.30M305.58,-54.95L296.56,766.75M313.17,-53.50L304.15,768.20M320.76,-52.05L311.74,769.65M335.94,-49.15L326.92,772.55M343.53,-47.70L334.51,774.00M351.12,-46.25L342.10,775.45M358.71,-44.80L349.69,776.90M366.31,-43.35L357.29,778.35M373.90,-41.90L364.88,779.80M381.49,-40.45L372.47,781.25M389.08,-39.00L380.06,782.70M396.67,-37.55L387.65,784.15M411.85,-34.65L402.83,787.05M419.44,-33.20L410.42,788.50M427.03,-31.75L418.01,789.95M434.62,-30.30L425.60,791.40M442.21,-28.85L433.19,792.85M449.81,-27.40L440.79,794.30M457.40,-25.95L448.38,795.75M464.99,-24.50L455.97,797.20M472.58,-23.05L463.56,798.65M487.76,-20.15L478.74,801.55M495.35,-18.70L486.33,803.00M502.94,-17.25L493.92,804.45M510.53,-15.80L501.51,805.90M518.12,-14.35L509.11,807.35M525.72,-12.90L516.70,808.80M533.31,-11.45L524.29,810.25M540.90,-10.00L531.88,811.70M548.49,-8.55L539.47,813.15M563.67,-5.65L554.65,816.05M571.26,-4.20L562.24,817.50M578.85,-2.75L569.83,818.95M586.44,-1.30L577.42,820.40M594.03,0.15L585.01,821.85M601.63,1.60L592.61,823.30M609.22,3.05L600.20,824.75M616.81,4.50L607.79,826.20M624.40,5.95L615.38,827.65M639.58,8.85L630.56,830.55M647.17,10.30L638.15,832.00M654.76,11.75L645.74,833.45M662.35,13.20L653.33,834.90M669.94,14.65L660.92,836.35M677.54,16.10L668.52,837.80M685.13,17.55L676.11,839.25M692.72,19.00L683.70,840.70M700.31,20.45L691.29,842.15M715.49,23.35L706.47,845.05M723.08,24.80L714.06,846.50M730.67,26.25L721.65,847.95M738.26,27.70L729.24,849.40M745.86,29.15L736.84,850.85M753.45,30.60L744.43,852.30M761.04,32.05L752.02,853.75M768.63,33.50L759.61,855.20M776.22,34.95L767.20,856.65M791.40,37.85L782.38,859.55M798.99,39.30L789.97,861.00M806.58,40.75L797.56,862.45M814.17,42.20L805.15,863.90M821.76,43.65L812.74,865.35M829.36,45.10L820.34,866.80M836.95,46.55L827.93,868.25M844.54,48.00L835.52,869.70M852.13,49.45L843.11,871.15M100.54,-86.63L859.64,58.37M100.46,-79.16L859.56,65.84M100.37,-71.69L859.47,73.31M100.29,-64.22L859.39,80.78M100.21,-56.75L859.31,88.25M100.13,-49.28L859.23,95.72M100.05,-41.81L859.15,103.19M99.96,-34.34L859.06,110.66M99.88,-26.87L858.98,118.13M99.72,-11.93L858.82,133.07M99.64,-4.46L858.74,140.54M99.55,3.01L858.65,148.01M99.47,10.48L858.57,155.48M99.39,17.95L858.49,162.95M99.31,25.42L858.41,170.42M99.23,32.89L858.33,177.89M99.14,40.36L858.24,185.36M99.06,47.83L858.16,192.83M98.90,62.77L858.00,207.77M98.82,70.24L857.92,215.24M98.73,77.71L857.83,222.71M98.65,85.18L857.75,230.18M98.57,92.65L857.67,237.65M98.49,100.12L857.59,245.12M98.41,107.59L857.51,252.59M98.32,115.06L857.42,260.06M98.24,122.53L857.34,267.53M98.08,137.47L857.18,282.47M98.00,144.94L857.10,289.94M97.91,152.41L857.01,297.41M97.83,159.88L856.93,304.88M97.75,167.35L856.85,312.35M97.67,174.82L856.77,319.82M97.59,182.29L856.69,327.29M97.50,189.76L856.60,334.76M97.42,197.23L856.52,342.23M97.26,212.17L856.36,357.17M97.18,219.64L856.28,364.64M97.09,227.11L856.19,372.11M97.01,234.58L856.11,379.58M96.93,242.05L856.03,387.05M96.85,249.52L855.95,394.52M96.77,256.99L855.87,401.99M96.68,264.46L855.78,409.46M96.60,271.93L855.70,416.93M96.44,286.87L855.54,431.87M96.36,294.34L855.46,439.34M96.27,301.81L855.37,446.81M96.19,309.28L855.29,454.28M96.11,316.75L855.21,461.75M96.03,324.22L855.13,469.22M95.95,331.69L855.05,476.69M95.86,339.16L854.96,484.16M95.78,346.63L854.88,491.63M95.62,361.57L854.72,506.57M95.54,369.04L854.64,514.04M95.45,376.51L854.55,521.51M95.37,383.98L854.47,528.98M95.29,391.45L854.39,536.45M95.21,398.92L854.31,543.92M95.13,406.39L854.23,551.39M95.04,413.86L854.14,558.86M94.96,421.33L854.06,566.33M94.80,436.27L853.90,581.27M94.72,443.74L853.82,588.74M94.63,451.21L853.73,596.21M94.55,458.68L853.65,603.68M94.47,466.15L853.57,611.15M94.39,473.62L853.49,618.62M94.31,481.09L853.41,626.09M94.22,488.56L853.32,633.56M94.14,496.03L853.24,641.03M93.98,510.97L853.08,655.97M93.90,518.44L853.00,663.44M93.81,525.91L852.91,670.91M93.73,533.38L852.83,678.38M93.65,540.85L852.75,685.85M93.57,548.32L852.67,693.32M93.49,555.79L852.59,700.79M93.40,563.26L852.50,708.26M93.32,570.73L852.42,715.73M93.16,585.67L852.26,730.67M93.08,593.14L852.18,738.14M92.99,600.61L852.09,745.61M92.91,608.08L852.01,753.08M92.83,615.55L851.93,760.55M92.75,623.02L851.85,768.02M92.67,630.49L851.77,775.49M92.58,637.96L851.68,782.96M92.50,645.43L851.60,790.43M92.34,660.37L851.44,805.37M92.26,667.84L851.36,812.84M92.17,675.31L851.27,820.31M92.09,682.78L851.19,827.78M92.01,690.25L851.11,835.25M91.93,697.72L851.03,842.72M91.85,705.19L850.95,850.19M91.76,712.66L850.86,857.66M91.68,720.13L850.78,865.13" stroke="#2a2a3c" stroke-opacity="0.22" stroke-width="1" fill="none"/>
<path d="M100.62,-94.10L91.60,727.60M176.53,-79.60L167.51,742.10M252.44,-65.10L243.42,756.60M328.35,-50.60L319.33,771.10M404.26,-36.10L395.24,785.60M480.17,-21.60L471.15,800.10M556.08,-7.10L547.06,814.60M631.99,7.40L622.97,829.10M707.90,21.90L698.88,843.60M783.81,36.40L774.79,858.10M859.72,50.90L850.70,872.60" stroke="#222234" stroke-opacity="0.4" stroke-width="1" fill="none"/>
<path d="M100.62,-94.10L859.72,50.90M99.80,-19.40L858.90,125.60M98.98,55.30L858.08,200.30M98.16,130.00L857.26,275.00M97.34,204.70L856.44,349.70M96.52,279.40L855.62,424.40M95.70,354.10L854.80,499.10M94.88,428.80L853.98,573.80M94.06,503.50L853.16,648.50M93.24,578.20L852.34,723.20M92.42,652.90L851.52,797.90M91.60,727.60L850.70,872.60" stroke="#222234" stroke-opacity="0.47" stroke-width="1" fill="none"/>
<polygon points="163.8,255.6 292.8,280.2 324.7,248.7 197.0,224.2" fill="#686868" stroke="none"/>
<polygon points="107.5,357.3 141.1,325.8 216.0,340.3 183.8,372.0" fill="#686868" stroke="#000" stroke-width="1.6" stroke-linejoin="round"/>
<ellipse cx="468.70000000000005" cy="404" rx="55.3" ry="23.3" fill="#686868" stroke="#000" stroke-width="1.6" stroke-linejoin="round"/>
<polyline points="163.8,257.6 59.7,359.4 279.8,402.4 433.6,252.0 390.5,243.6" fill="none" stroke="#000" stroke-width="1.6" stroke-linejoin="round" stroke-linecap="round"/>
<polyline points="207.2,263.9 207.2,288.0 334.3,312.2 334.3,239.2" fill="none" stroke="#000" stroke-width="1.6" stroke-linejoin="round" stroke-linecap="round"/>
<polyline points="334.3,239.2 390.5,184.4 390.5,259.7 334.3,312.2" fill="none" stroke="#000" stroke-width="1.6" stroke-linejoin="round" stroke-linecap="round"/>
<polyline points="207.2,214.5 261.5,159.3 390.5,184.4" fill="none" stroke="#000" stroke-width="1.6" stroke-linejoin="round" stroke-linecap="round"/>
<polyline points="207.2,214.5 334.3,239.2" fill="none" stroke="#000" stroke-width="1.6" stroke-linejoin="round" stroke-linecap="round"/>
<polyline points="207.2,214.5 163.8,255.6 292.8,280.2 334.3,239.2" fill="none" stroke="#000" stroke-width="1.6" stroke-linejoin="round" stroke-linecap="round"/>
<path d="M476.0,320.8 A78,33.2 0 0 0 632.0,320.8" fill="none" stroke="#000" stroke-width="1.6" stroke-linejoin="round"/>
<line x1="624.9" y1="261" x2="624.9" y2="332" stroke="#111" stroke-width="1.4"/>
<ellipse cx="554" cy="246" rx="78" ry="33.2" fill="none" stroke="#000" stroke-width="1.6" stroke-linejoin="round"/>
<ellipse cx="555" cy="164.6" rx="77.9" ry="33.2" fill="none" stroke="#000" stroke-width="1.6" stroke-linejoin="round"/>
<line x1="555.6" y1="83.1" x2="554" y2="246.10000000000002" stroke="#000" stroke-width="1.6"/>
<path d="M683.8,361.1 C731.0,357.0 777.0,369.0 785.5,394.0" fill="none" stroke="#000" stroke-width="1.6" stroke-linejoin="round"/>
<ellipse cx="0" cy="0" rx="18.6" ry="15.6" transform="translate(779.6,410.0) rotate(40)" fill="none" stroke="#000" stroke-width="1.6" stroke-linejoin="round"/>
<line x1="962.0999999999999" y1="570.6" x2="962.0999999999999" y2="551" stroke="#22229a" stroke-width="2"/>
<path d="M959.5999999999999,557 L962.0999999999999,549.5 L964.5999999999999,557 Z" fill="#22229a"/>
<line x1="962.0999999999999" y1="570.6" x2="968.5" y2="565.2" stroke="#1a9a1a" stroke-width="2"/>
<line x1="962.0999999999999" y1="570.6" x2="982" y2="574.5" stroke="#9a1a1a" stroke-width="2"/>
<path d="M976,571 L983,574.6 L975,576 Z" fill="#9a1a1a"/>
<text x="964.5" y="550.5" font-family="Liberation Sans" font-size="9.5" fill="#000">Z</text>
<text x="970.5" y="565" font-family="Liberation Sans" font-size="9.5" fill="#000">Y</text>
<text x="985.3" y="576.5" font-family="Liberation Sans" font-size="9.5" fill="#000">X</text>
</svg>
</div>
<div class="abs" style="left:1285px;top:84px;width:1px;height:4px;background:#c8c4bf;box-shadow:3px 0 0 #c8c4bf,6px 0 0 #c8c4bf"></div>
<div class="btn" style="left:1276px;top:93px;width:24px;height:24px;background:linear-gradient(#fdfdfd,#e9e7e4)"></div>
<svg class="ic" style="left:1277px;top:94px" width="22" height="22" viewBox="0 0 24 24"><path d="M8.5,11 L8.5,8 A3.5,3.5 0 0 1 15.5,8 L15.5,11" stroke="#0a4638" stroke-width="2.4" fill="none"/><path d="M8.5,11 L8.5,8 A3.5,3.5 0 0 1 15.5,8 L15.5,11" stroke="#14a486" stroke-width="1.2" fill="none"/><rect x="6.5" y="11" width="11" height="8.5" rx="1" fill="#14a486" stroke="#0a4638" stroke-width="0.9"/><rect x="8" y="12.5" width="3" height="5.5" fill="#7adcc0"/></svg>
<div class="btn" style="left:1276px;top:119px;width:24px;height:24px;background:linear-gradient(#fdfdfd,#e9e7e4)"></div>
<svg class="ic" style="left:1277px;top:120px" width="22" height="22" viewBox="0 0 24 24"><path d="M5,19 L19,6" stroke="#0a4638" stroke-width="3.8000000000000003" fill="none" stroke-linecap="square"/><path d="M5,19 L19,6" stroke="#14a486" stroke-width="2.2" fill="none" stroke-linecap="square"/><ellipse cx="12" cy="12.5" rx="3.8" ry="2.8" transform="rotate(-42 12 12.5)" fill="#14a486" stroke="#0a4638" stroke-width="0.9"/></svg>
<div class="btn" style="left:1276px;top:145px;width:24px;height:24px;background:linear-gradient(#fdfdfd,#e9e7e4)"></div>
<svg class="ic" style="left:1277px;top:146px" width="22" height="22" viewBox="0 0 24 24"><path d="M12,6 L12,17" stroke="#0a4638" stroke-width="3.8000000000000003" fill="none" stroke-linecap="square"/><path d="M12,6 L12,17" stroke="#14a486" stroke-width="2.2" fill="none" stroke-linecap="square"/><path d="M5.5,18.5 L18.5,18.5" stroke="#0a4638" stroke-width="3.8000000000000003" fill="none" stroke-linecap="square"/><path d="M5.5,18.5 L18.5,18.5" stroke="#14a486" stroke-width="2.2" fill="none" stroke-linecap="square"/></svg>
<div class="btn" style="left:1276px;top:171px;width:24px;height:24px;background:linear-gradient(#e6e4e1,#d6d3cf)"></div>
<svg class="ic" style="left:1277px;top:172px" width="22" height="22" viewBox="0 0 24 24"><path d="M8,4 L8,20 M16,4 L16,20 M4,8 L20,8 M4,16 L20,16" stroke="#0a4638" stroke-width="4.2" stroke-linecap="round"/><path d="M8,4 L8,20 M16,4 L16,20 M4,8 L20,8 M4,16 L20,16" stroke="#14a486" stroke-width="2.6" stroke-linecap="round"/><rect x="10" y="10" width="4" height="4" fill="#e8e6e2"/></svg>
<div class="btn" style="left:1276px;top:197px;width:24px;height:24px;background:linear-gradient(#fdfdfd,#e9e7e4)"></div>
<svg class="ic" style="left:1277px;top:198px" width="22" height="22" viewBox="0 0 24 24"><path d="M6,6 L18,18 M18,6 L6,18" stroke="#0a4638" stroke-width="4.4" fill="none" stroke-linecap="square"/><path d="M6,6 L18,18 M18,6 L6,18" stroke="#14a486" stroke-width="2.8" fill="none" stroke-linecap="square"/></svg>
<div class="btn" style="left:1276px;top:223px;width:24px;height:24px;background:linear-gradient(#fdfdfd,#e9e7e4)"></div>
<svg class="ic" style="left:1277px;top:224px" width="22" height="22" viewBox="0 0 24 24"><path d="M5,12.5 L18,6 M6,18.5 L19,12" stroke="#0a4638" stroke-width="3.8000000000000003" fill="none" stroke-linecap="square"/><path d="M5,12.5 L18,6 M6,18.5 L19,12" stroke="#14a486" stroke-width="2.2" fill="none" stroke-linecap="square"/></svg>
<div class="btn" style="left:1276px;top:249px;width:24px;height:24px;background:linear-gradient(#e6e4e1,#d6d3cf)"></div>
<svg class="ic" style="left:1277px;top:250px" width="22" height="22" viewBox="0 0 24 24"><path d="M8.5,16 L18,6" stroke="#0a4638" stroke-width="3.8000000000000003" fill="none" stroke-linecap="square"/><path d="M8.5,16 L18,6" stroke="#14a486" stroke-width="2.2" fill="none" stroke-linecap="square"/><circle cx="7.5" cy="17" r="3" fill="#14a486" stroke="#0a4638" stroke-width="0.9"/></svg>
<div class="btn" style="left:1276px;top:275px;width:24px;height:24px;background:linear-gradient(#fdfdfd,#e9e7e4)"></div>
<svg class="ic" style="left:1277px;top:276px" width="22" height="22" viewBox="0 0 24 24"><circle cx="12" cy="12" r="6.3" fill="none" stroke="#0a4638" stroke-width="2.2"/><circle cx="12" cy="12" r="6.3" fill="none" stroke="#14a486" stroke-width="1"/><circle cx="12" cy="5.7" r="2.5" fill="#14a486" stroke="#0a4638" stroke-width="0.9"/><circle cx="12" cy="18.3" r="2.5" fill="#14a486" stroke="#0a4638" stroke-width="0.9"/><circle cx="5.7" cy="12" r="2.5" fill="#14a486" stroke="#0a4638" stroke-width="0.9"/><circle cx="18.3" cy="12" r="2.5" fill="#14a486" stroke="#0a4638" stroke-width="0.9"/></svg>
<div class="btn" style="left:1276px;top:301px;width:24px;height:24px;background:linear-gradient(#e6e4e1,#d6d3cf)"></div>
<svg class="ic" style="left:1277px;top:302px" width="22" height="22" viewBox="0 0 24 24"><circle cx="12" cy="12" r="7.5" fill="#14a486" stroke="#0a4638" stroke-width="1"/><circle cx="12" cy="12" r="5" fill="#dcdad6" stroke="#0a4638" stroke-width="0.8"/><circle cx="12" cy="12" r="3.3" fill="#14a486" stroke="#0a4638" stroke-width="0.8"/><circle cx="12" cy="12" r="1.3" fill="#dcdad6"/></svg>
<div class="btn" style="left:1276px;top:327px;width:24px;height:24px;background:linear-gradient(#fdfdfd,#e9e7e4)"></div>
<svg class="ic" style="left:1277px;top:328px" width="22" height="22" viewBox="0 0 24 24"><circle cx="6" cy="12" r="2.1" fill="#14a486" stroke="#0a4638" stroke-width="0.8"/><circle cx="12" cy="12" r="2.1" fill="#14a486" stroke="#0a4638" stroke-width="0.8"/><circle cx="18" cy="12" r="2.1" fill="#14a486" stroke="#0a4638" stroke-width="0.8"/></svg>
<div class="btn" style="left:1276px;top:353px;width:24px;height:24px;background:linear-gradient(#fdfdfd,#e9e7e4)"></div>
<svg class="ic" style="left:1277px;top:354px" width="22" height="22" viewBox="0 0 24 24"><path d="M6,12 L17,18" stroke="#0a4638" stroke-width="4.2" fill="none" stroke-linecap="square"/><path d="M6,12 L17,18" stroke="#14a486" stroke-width="2.6" fill="none" stroke-linecap="square"/><circle cx="16.5" cy="7" r="2.4" fill="#14a486" stroke="#0a4638" stroke-width="0.8"/></svg>
<div class="btn" style="left:1276px;top:379px;width:24px;height:24px;background:linear-gradient(#fdfdfd,#e9e7e4)"></div>
<svg class="ic" style="left:1277px;top:380px" width="22" height="22" viewBox="0 0 24 24"><path d="M12,6 L12,18 M6,12 L18,12" stroke="#0a4638" stroke-width="4.2" fill="none" stroke-linecap="square"/><path d="M12,6 L12,18 M6,12 L18,12" stroke="#14a486" stroke-width="2.6" fill="none" stroke-linecap="square"/></svg>
<div class="btn" style="left:1276px;top:405px;width:24px;height:24px;background:linear-gradient(#fdfdfd,#e9e7e4)"></div>
<svg class="ic" style="left:1277px;top:406px" width="22" height="22" viewBox="0 0 24 24"><path d="M6,9.5 L6,18 M8.5,9.5 L17.5,9.5 L17.5,14" stroke="#0a4638" stroke-width="1.8" fill="none"/><path d="M6,9.5 L6,18 M8.5,9.5 L17.5,9.5 L17.5,14" stroke="#14a486" stroke-width="0.8" fill="none"/><path d="M4.5,11 L4.5,16 M12,5 L12,8 M14,4.5 L14,8 M16,5 L16,8" stroke="#0a4638" stroke-width="1"/></svg>
<div class="btn" style="left:1276px;top:431px;width:24px;height:24px;background:linear-gradient(#fdfdfd,#e9e7e4)"></div>
<svg class="ic" style="left:1277px;top:432px" width="22" height="22" viewBox="0 0 24 24"><rect x="5" y="5" width="14" height="14" rx="0.8" fill="#14a486" stroke="#0a4638" stroke-width="1"/><circle cx="8.8" cy="15.2" r="1.3" fill="none" stroke="#0a4638" stroke-width="0.9"/></svg>
<div class="t" style="left:3.88px;top:86.63px;font-size:14.5px;line-height:14.5px;color:#3c3c3c;font-weight:normal;transform:scaleX(1.0221);transform-origin:0 0;">Combo View</div>
<svg class="ic" style="left:243px;top:87px" width="32" height="13" viewBox="0 0 32 13"><rect x="1.5" y="1.5" width="10" height="10" rx="2" fill="none" stroke="#6e6a66" stroke-width="1"/><rect x="5" y="3.5" width="4.5" height="4.5" fill="none" stroke="#6e6a66" stroke-width="1"/><rect x="3.5" y="5.5" width="4.5" height="4.5" fill="#f2f1f0" stroke="#6e6a66" stroke-width="1"/><rect x="18.5" y="1.5" width="10" height="10" rx="2" fill="none" stroke="#6e6a66" stroke-width="1"/><path d="M21,4 L26,9 M26,4 L21,9" stroke="#5a5652" stroke-width="1.8"/></svg>
<div class="abs" style="left:3px;top:106px;width:57px;height:31px;box-sizing:border-box;border:1px solid #c4c0ba;border-bottom:none;border-radius:4px 4px 0 0;background:linear-gradient(#f6f5f4,#f2f1f0)"></div>
<div class="abs" style="left:60px;top:109px;width:51px;height:26px;box-sizing:border-box;border:1px solid #c4c0ba;border-bottom:none;border-left:none;border-radius:0 4px 0 0;background:linear-gradient(#f4f3f2,#dcdad6)"></div>
<div class="t" style="left:9.17px;top:113.53px;font-size:14.5px;line-height:14.5px;color:#3c3c3c;font-weight:normal;transform:scaleX(1.1070);transform-origin:0 0;">Model</div>
<div class="t" style="left:69.01px;top:115.23px;font-size:14.5px;line-height:14.5px;color:#3c3c3c;font-weight:normal;transform:scaleX(0.9558);transform-origin:0 0;">Tasks</div>
<div class="abs" style="left:2px;top:135px;width:273px;height:580px;box-sizing:border-box;border:1px solid #c4c0ba;border-radius:0 0 4px 4px;background:#f2f1f0"></div>
<div class="abs" style="left:4px;top:137px;width:253px;height:150px;box-sizing:border-box;border:1px solid #c4c0ba;background:#fff"></div>
<div class="abs" style="left:5px;top:138px;width:251px;height:24px;background:#f2f1f0"></div>
<div class="abs" style="left:5px;top:138px;width:161px;height:24px;box-sizing:border-box;border-right:1px solid #c4c0ba;border-bottom:1px solid #c4c0ba;background:linear-gradient(#fdfdfd,#ecebe9)"></div>
<div class="t" style="left:8.43px;top:143.63px;font-size:14.5px;line-height:14.5px;color:#3c3c3c;font-weight:normal;transform:scaleX(1.0596);transform-origin:0 0;">Labels &amp; Attributes</div>
<div class="abs" style="left:260px;top:137px;width:13px;height:150px;box-sizing:border-box;border:1px solid #c4c0ba;border-radius:6px;background:linear-gradient(90deg,#eeedeb,#f8f8f7)"></div>
<div class="abs" style="left:260px;top:150px;width:13px;height:63px;box-sizing:border-box;border:1px solid #b8b4ae;border-radius:6px;background:linear-gradient(90deg,#f6f6f5,#e4e2df)"></div>
<div class="abs" style="left:261px;top:213px;width:11px;height:61px;background:#d8d5d1;border-radius:0 0 5px 5px"></div>
<svg class="ic" style="left:260px;top:137px" width="13" height="150" viewBox="0 0 13 150"><path d="M4.5,8 L6.5,6 L8.5,8 Z" fill="#aaa"/><path d="M4,142 L6.5,145 L9,142 Z" fill="#666"/><path d="M5,42 L8,42 M5,44 L8,44 M5,46 L8,46" stroke="#aaa" stroke-width="0.8"/></svg>
<div class="t" style="left:8.00px;top:165.53px;font-size:14.5px;line-height:14.5px;color:#3c3c3c;font-weight:normal;transform:scaleX(1.0743);transform-origin:0 0;">Application</div>
<svg class="ic" style="left:12px;top:186px" width="10" height="10" viewBox="0 0 10 10"><path d="M1,2 L9,2 L5,8 Z" fill="#666"/></svg>
<svg class="ic" style="left:29px;top:183px" width="14" height="15" viewBox="0 0 14 15"><rect x="0.5" y="0.5" width="13" height="14" fill="#eee" stroke="#bbb"/><rect x="2.5" y="6" width="7" height="7" fill="#2a3ab0"/><path d="M5,5 A4,4 0 0 1 12,5 L12,9 L9,9 Z" fill="#e02020"/></svg>
<div class="t" style="left:49.51px;top:184.03px;font-size:14.5px;line-height:14.5px;color:#3c3c3c;font-weight:bold;transform:scaleX(0.9863);transform-origin:0 0;">Unnamed1</div>
<div class="abs" style="left:5px;top:137px;width:251px;height:149px;overflow:hidden">
<svg class="ic" style="left:43px;top:64.9px" width="16" height="16" viewBox="0 0 16 16"><rect x="1.8" y="7" width="8" height="8" fill="none" stroke="#2020f0" stroke-width="1.3"/><circle cx="10.2" cy="6.3" r="4.6" fill="none" stroke="#2020f0" stroke-width="1.3"/></svg>
<div class="t" style="left:65.6px;top:66.13px;font-size:14.5px;line-height:14.5px;color:#3c3c3c">Rectangle</div>
<svg class="ic" style="left:43px;top:84.30000000000001px" width="17" height="16" viewBox="0 0 17 16"><defs><linearGradient id="exg" x1="0" y1="0" x2="1" y2="1"><stop offset="0" stop-color="#a8c0f0"/><stop offset="1" stop-color="#3a5ac8"/></linearGradient></defs><path d="M0.5,9.5 L3.5,7 L15,7 L15,12.5 L12,15 L0.5,15 Z" fill="url(#exg)" stroke="#2a40a0" stroke-width="0.7"/><path d="M0.5,9.5 L12,9.5 L15,7 M12,9.5 L12,15" stroke="#2a40a0" stroke-width="0.6" fill="none"/><path d="M7.5,0.3 L11.5,4.3 L9.2,4.3 L9.2,9 L5.8,9 L5.8,4.3 L3.5,4.3 Z" fill="#1a3aa8" stroke="#0a2080" stroke-width="0.5"/><path d="M15,12.5 L16.5,13.5 L13,16 L12,15 Z" fill="#555" opacity="0.6"/></svg>
<svg class="ic" style="left:28px;top:87.80000000000001px" width="8" height="10" viewBox="0 0 8 10"><path d="M1.8,1.5 L6.5,5 L1.8,8.5 Z" fill="#bbb" stroke="#666" stroke-width="1"/></svg>
<div class="t" style="left:65.6px;top:85.53px;font-size:14.5px;line-height:14.5px;color:#3c3c3c">Extrude</div>
<svg class="ic" style="left:43px;top:102.80000000000001px" width="16" height="16" viewBox="0 0 16 16"><rect x="1.8" y="7" width="8" height="8" fill="none" stroke="#2020f0" stroke-width="1.3"/><circle cx="10.2" cy="6.3" r="4.6" fill="none" stroke="#2020f0" stroke-width="1.3"/></svg>
<div class="t" style="left:65.6px;top:104.03px;font-size:14.5px;line-height:14.5px;color:#3c3c3c">Rectangle002</div>
<svg class="ic" style="left:43px;top:122.10000000000002px" width="16" height="16" viewBox="0 0 16 16"><rect x="1.8" y="7" width="8" height="8" fill="none" stroke="#2020f0" stroke-width="1.3"/><circle cx="10.2" cy="6.3" r="4.6" fill="none" stroke="#2020f0" stroke-width="1.3"/></svg>
<div class="t" style="left:65.6px;top:123.33px;font-size:14.5px;line-height:14.5px;color:#3c3c3c">Rectangle003</div>
<svg class="ic" style="left:43px;top:141.3px" width="16" height="16" viewBox="0 0 16 16"><rect x="1.8" y="7" width="8" height="8" fill="none" stroke="#2020f0" stroke-width="1.3"/><circle cx="10.2" cy="6.3" r="4.6" fill="none" stroke="#2020f0" stroke-width="1.3"/></svg>
<div class="t" style="left:65.6px;top:142.53px;font-size:14.5px;line-height:14.5px;color:#3c3c3c">Circle</div>
</div>
<div class="abs" style="left:137px;top:288px;width:1px;height:4px;background:#c8c4bf;box-shadow:2px 0 0 #c8c4bf,4px 0 0 #c8c4bf"></div>
<div class="abs" style="left:4px;top:293px;width:269px;height:391px;box-sizing:border-box;border:1px solid #c4c0ba;border-radius:3px;background:#f2f1f0"></div>
<div class="abs" style="left:6px;top:295px;width:265px;height:387px;box-sizing:border-box;border:1px solid #c8c4be;background:#fff"></div>
<div class="abs" style="left:7px;top:296px;width:263px;height:25px;box-sizing:border-box;border-bottom:1px solid #c4c0ba;background:linear-gradient(#fdfdfd,#ecebe9)"></div>
<div class="abs" style="left:106px;top:296px;width:1px;height:25px;background:#c4c0ba"></div>
<div class="t" style="left:9.99px;top:301.73px;font-size:14.5px;line-height:14.5px;color:#3c3c3c;font-weight:normal;transform:scaleX(1.0897);transform-origin:0 0;">Property</div>
<div class="t" style="left:110.89px;top:301.73px;font-size:14.5px;line-height:14.5px;color:#3c3c3c;font-weight:normal;transform:scaleX(1.0625);transform-origin:0 0;">Value</div>
<svg class="ic" style="left:0px;top:682px" width="276" height="33" viewBox="0 0 276 33"><path d="M4.5,3 L13,27 Q14.5,29 17,29 L40,29 Q42.5,29 43.5,27 L53,3" fill="#efeeec" stroke="#5a5856" stroke-width="1"/><path d="M54,3 L63.5,28 Q65,30 67,30 L89,30 Q91.5,30 92.5,28 L100.5,3" fill="#ffffff" stroke="#5a5856" stroke-width="1"/></svg>
<div class="t" style="left:12.90px;top:689.33px;font-size:14.5px;line-height:14.5px;color:#3c3c3c;font-weight:normal;transform:scaleX(1.0064);transform-origin:0 0;">View</div>
<div class="t" style="left:60.78px;top:689.73px;font-size:14.5px;line-height:14.5px;color:#3c3c3c;font-weight:normal;transform:scaleX(1.0169);transform-origin:0 0;">Data</div>
<div class="abs" style="left:276px;top:395px;width:4px;height:1px;background:#c8c4bf;box-shadow:0 3px 0 #c8c4bf,0 6px 0 #c8c4bf"></div>
<div class="abs" style="left:281px;top:682px;width:164px;height:33px;box-sizing:border-box;border:1px solid #c4c0ba;border-top:none;border-radius:0 0 4px 4px;background:linear-gradient(#fdfdfd,#f4f3f2)"></div>
<svg class="ic" style="left:287px;top:689px" width="18" height="18" viewBox="0 0 18 18"><path d="M1.5,1.5 L9,1.5 L9,4.5 L4.5,4.5 L4.5,7.5 L8,7.5 L8,10.5 L4.5,10.5 L4.5,15.5 L1.5,15.5 Z" fill="#e83818" stroke="#a01808" stroke-width="0.5"/><g transform="translate(11,11)"><path d="M-1,-6 L1,-6 L1.3,-4.2 L2.8,-3.6 L4.3,-4.7 L5.7,-3.3 L4.6,-1.8 L5.2,-0.3 L6.5,0 L6.5,2 L4.8,2.3 L4.2,3.8 L5.3,5.3 L3.9,6.7 L2.4,5.6 L0.9,6.2 L0.6,8 L-1.4,8 L-1.7,6.2 L-3.2,5.6 L-4.7,6.7 L-6.1,5.3 L-5,3.8 L-5.6,2.3 L-7.4,2 L-7.4,0 L-5.6,-0.3 L-5,-1.8 L-6.1,-3.3 L-4.7,-4.7 L-3.2,-3.6 L-1.7,-4.2 Z" transform="scale(0.85) translate(0.5,-1)" fill="#1a3aa8" stroke="#0a1a70" stroke-width="0.4"/><circle cx="-0.3" cy="0" r="2" fill="#fff"/></g></svg>
<div class="t" style="left:311.49px;top:691.53px;font-size:14.5px;line-height:14.5px;color:#3c3c3c;font-weight:normal;transform:scaleX(1.0073);transform-origin:0 0;">Unnamed1 : 1*</div>
<svg class="ic" style="left:420px;top:692px" width="14" height="14" viewBox="0 0 14 14"><path d="M2.5,2.5 L11.5,11.5 M11.5,2.5 L2.5,11.5" stroke="#5a5a58" stroke-width="3.2" stroke-linecap="round"/><path d="M3.5,3.5 L10.5,10.5 M10.5,3.5 L3.5,10.5" stroke="#777" stroke-width="1.2" stroke-linecap="round"/></svg>
<div class="abs" style="left:3px;top:716px;width:1299px;height:1px;background:#d8d5d1"></div>
<div class="t" style="left:7.40px;top:722.83px;font-size:14.5px;line-height:14.5px;color:#3c3c3c;font-weight:normal;transform:scaleX(1.0038);transform-origin:0 0;">Preselected: Unnamed.Circle003.Face1 (39.784824,0.000000,-0.933361)</div>
<div class="t" style="left:1176.90px;top:723.73px;font-size:14.5px;line-height:14.5px;color:#3c3c3c;font-weight:normal;transform:scaleX(1.0025);transform-origin:0 0;">120.18 x 72.81 mm</div>
</body></html>
